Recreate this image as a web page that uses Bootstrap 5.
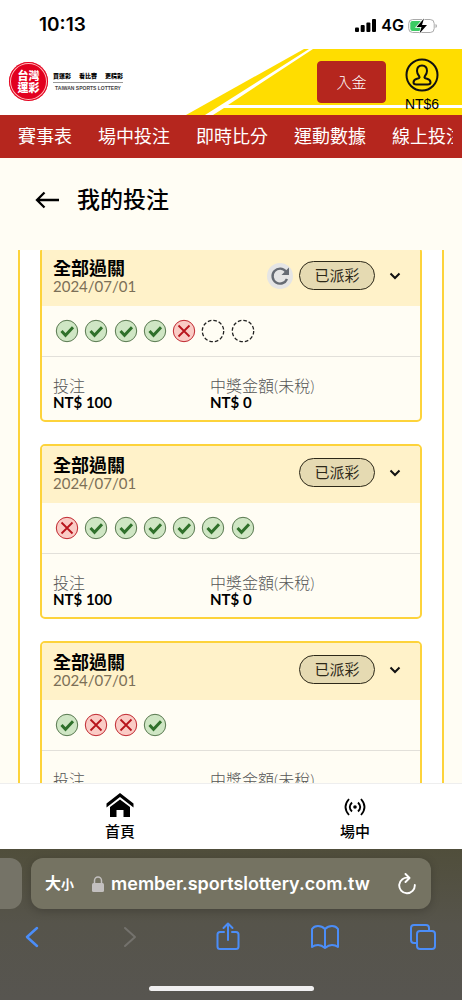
<!DOCTYPE html>
<html lang="zh-Hant">
<head>
<meta charset="utf-8">
<meta name="viewport" content="width=device-width, initial-scale=1">
<title>我的投注</title>
<link href="https://cdn.jsdelivr.net/npm/bootstrap@5.3.0/dist/css/bootstrap.min.css" rel="stylesheet">
<style>
  body { font-family: Lato, "Noto Sans CJK TC", sans-serif; background: #fffdf4; color: #000; line-height: 1.2; }
  svg { display: block; flex: none; }
  .ui-font { font-family: Inter, "Noto Sans CJK TC", sans-serif; }

  /* status bar */
  .status { height: 49px; padding: 2px 24px 0 39px; font-size: 19px; }
  .status .net { font-size: 16px; }

  /* site header */
  .site-head { height: 66px; padding: 0 22px 0 9px; }
  .site-head .stripes { position: absolute; right: 0; top: 0; z-index: 0; }
  .brand { margin-top: 13px; gap: 5px; }
  .logo-seal { width: 39px; height: 39px; background: #e2001f; color: #fff; font-size: 11px; font-weight: 900; line-height: 12px; box-shadow: inset 0 0 0 1px #e2001f, inset 0 0 0 2px #fbb; }
  .tagline { font-size: 6px; font-weight: 900; line-height: 8px; gap: 8px; padding-bottom: 2px; margin-bottom: 1px; border-bottom: 1px solid #999; }
  .tagline-en { font: 700 5px/8px "Liberation Sans", sans-serif; color: #444; }
  .btn-deposit { --bs-btn-color: #fff; --bs-btn-bg: #b5261e; --bs-btn-border-color: #b5261e; --bs-btn-hover-bg: #9c1f18; --bs-btn-hover-color: #fff; width: 69px; height: 42px; margin-top: 12px; padding: 0; font-size: 15px; border-radius: 4px; font-weight: 300; }
  .account { font: 14px/16px "Liberation Sans", sans-serif; width: 36px; margin: 9px 0 0 18px; }

  .main-nav { background: #b5261e; height: 43px; padding: 0 9px 0 18px; }
  .main-nav .nav { gap: 26px; font-size: 18px; }
  .main-nav a { color: #fff; text-decoration: none; white-space: nowrap; }

  /* page title */
  .page-title { height: 92px; padding: 0 34px 8px; gap: 16px; }
  .page-title h1 { font-size: 23px; font-weight: 500; margin: 0; }

  /* bets */
  .bar-fixed { flex: none; }
  .bets { flex: 1 1 0; min-height: 0; margin: 0 18px; border: solid #fdd33b; border-width: 0 2px; background: #fff; }
  .bet-list { margin-top: -3px; padding: 0 20px; gap: 22px; }
  .bet { border: 2px solid #fdd33b; border-radius: 5px; background: #fffdf4; }
  .bet-head { background: #fff2c9; height: 57px; padding: 3px 19px 7px 11px; border-radius: 3px 3px 0 0; }
  .bet-name { font-size: 18px; font-weight: 700; line-height: 20px; margin: 0; }
  .bet-date { font-size: 15px; line-height: 16px; color: #7b6f57; }
  .state { width: 76px; height: 29px; border: 1px solid #2c2818; border-radius: 15px; background: #e5dab2; font-size: 15px; line-height: 27px; color: #2c2818; text-align: center; }
  .round-btn { width: 26px; height: 26px; margin-right: 6px; padding: 0; border: 0; border-radius: 50%; background: #e5e5e5; display: grid; place-items: center; }
  .chev-btn { padding: 0; border: 0; background: none; margin-left: 14px; }
  .legs { padding: 13px; border-bottom: 1px solid #e2e0da; }
  .leg-track { display: grid; grid-template-columns: repeat(7, 1fr); gap: 5px; width: 200px; }
  .sums { padding: 20px 11px 9px; line-height: 17px; font-size: 16px; }
  .sums dl { width: 157px; margin: 0; }
  .sums dt { font-weight: 300; color: #555; white-space: nowrap; }
  .sums dd { margin: 0; font-weight: 700; font-size: 15px; }

  /* site tabs */
  .tabs { height: 66px; background: #fff; border-top: 1px solid #eee; padding: 8px 92px 0 105px; }
  .tabs a { color: #000; text-decoration: none; font-size: 15px; font-weight: 500; line-height: 20px; }
  .tab-icon { height: 29px; }

  /* browser chrome */
  .chrome { background: linear-gradient(#504e3b, #56544b 50%, #575550); padding-top: 9px; }
  .addr-side { flex: none; width: 22px; background: #757367; border-radius: 0 12px 12px 0; }
  .addr { height: 51px; min-width: 0; background: #757362; border-radius: 12px; color: #fff; margin: 0 31px 0 9px; padding: 0 14px; box-shadow: 0 2px 10px #0003; }
  .addr button, .tools button { border: 0; padding: 0; background: none; color: inherit; }
  .addr .text-size { font-size: 16px; margin-right: 18px; }
  .addr input { border: 0; background: none; color: #fff; font-size: 18px; font-weight: 600; min-width: 0; padding: 0; margin-left: 7px; }
  .addr small { font-size: 13px; }
  .tools { color: #4b8df8; padding: 9px 24px 0 17px; height: 47px; }
  .tools button { width: 30px; display: grid; place-items: center; }
  .tools button:disabled { color: #74726d; }
  .home-bar { width: 165px; height: 5px; border-radius: 3px; background: #f0eff0; margin: 30px auto 9px; }
</style>
</head>
<body>
<svg width="0" height="0" class="position-absolute" aria-hidden="true">
  <symbol id="ok" viewBox="0 0 24 24"><circle cx="12" cy="12" r="10.700" fill="#cfe6c4" stroke="#58784f"/><path d="M6.500 12l4 4.200L18 8.300" fill="none" stroke="#2f702b" stroke-width="3"/></symbol>
  <symbol id="no" viewBox="0 0 24 24"><circle cx="12" cy="12" r="10.700" fill="#facbc5" stroke="#c0272f"/><path d="M6.500 6.500l11 11M17.500 6.500l-11 11" fill="none" stroke="#b8141c" stroke-width="1.800"/></symbol>
  <symbol id="wait" viewBox="0 0 24 24"><circle cx="12" cy="12" r="10.700" fill="none" stroke="#222" stroke-width="1.300" stroke-dasharray="3.600 2.003"/></symbol>
  <symbol id="chev" viewBox="0 0 12 10"><path d="M1.500 2.500L6 7l4.500-4.500" fill="none" stroke="#111" stroke-width="2"/></symbol>
</svg>
<div class="d-flex flex-column vh-100 overflow-hidden">
  <div class="status bar-fixed ui-font bg-white d-flex align-items-center justify-content-between fw-semibold">
    <span>10:13</span>
    <span class="net d-flex align-items-center gap-1">
      <svg width="22" height="14" viewBox="0 0 22 14"><rect y="8.500" width="4" height="4.500" rx="1"/><rect x="5.700" y="6" width="4" height="7" rx="1"/><rect x="11.400" y="3.500" width="4" height="9.500" rx="1"/><rect x="17" width="4" height="13" rx="1"/></svg>
      <span>4G</span>
      <svg width="30" height="16" viewBox="0 0 30 16"><rect x=".7" y="1.500" width="25.500" height="13" rx="4" fill="#fff" stroke="#aaa"/><path d="M4.500 3H14v10H4.500Q2.300 13 2.300 10.800V5.200Q2.300 3 4.500 3z" fill="#3ccb63"/><path d="M27.500 6v4q1.500-.5 1.500-2t-1.500-2z" fill="#aaa"/><path d="M16 .5L8.500 9h5l-2 6.500L19 7h-5z" stroke="#fff" stroke-width="1.500" paint-order="stroke"/></svg>
    </span>
  </div>

  <header class="site-head bar-fixed position-relative bg-white d-flex align-items-start overflow-hidden">
    <svg class="stripes" width="276" height="66" viewBox="0 0 276 66" aria-hidden="true"><path d="M0 66L118 0h158v66z" fill="#fd0"/><path d="M19 66L123 0h4L42 56h234v3H38l-11 7z" fill="#fff"/></svg>
    <a href="#" class="brand d-flex align-items-center text-reset text-decoration-none">
      <span class="logo-seal rounded-circle d-grid align-content-center text-center"><span>台灣</span><span>運彩</span></span>
      <span class="text-center">
        <span class="tagline d-flex"><span>買運彩</span><span>看比賽</span><span>更精彩</span></span>
        <span class="tagline-en d-block text-nowrap">TAIWAN SPORTS LOTTERY</span>
      </span>
    </a>
    <button class="btn btn-deposit position-relative ms-auto">入金</button>
    <a href="#" class="account position-relative d-flex flex-column align-items-center text-reset text-decoration-none">
      <svg width="34" height="34" viewBox="0 0 34 34" fill="none" stroke="#111" stroke-width="2"><circle cx="17" cy="17" r="15.500"/><path d="M17 7.500c-3.500 0-5 2.700-5 5.500 0 2.500 1 4 2.300 5.500.8 1.200-.3 1.800-2.300 2.300-2.500.7-3.500 1.700-3.500 3.700 0 1.700 1 2 3 2h11c2 0 3-.3 3-2 0-2-1-3-3.500-3.700-2-.5-3.100-1.100-2.300-2.300C21 17 22 15.500 22 13c0-2.800-1.500-5.500-5-5.500z"/></svg>
      <span class="mt-1">NT$6</span>
    </a>
  </header>

  <nav class="main-nav bar-fixed">
    <div class="nav flex-nowrap align-items-center overflow-hidden h-100">
      <a href="#">賽事表</a><a href="#">場中投注</a><a href="#">即時比分</a><a href="#">運動數據</a><a href="#">線上投注</a>
    </div>
  </nav>

  <div class="page-title bar-fixed d-flex align-items-center">
    <a href="#" aria-label="返回"><svg width="27" height="20" viewBox="0 0 27 20" fill="none" stroke="#000" stroke-width="2.300"><path d="M25 10H3M10.500 2.500L3 10l7.500 7.500"/></svg></a>
    <h1>我的投注</h1>
  </div>

  <main class="bets overflow-hidden">
    <div class="bet-list d-flex flex-column">
      <article class="bet">
        <div class="bet-head d-flex align-items-center">
          <div class="me-auto"><h2 class="bet-name">全部過關</h2><div class="bet-date">2024/07/01</div></div>
          <button class="round-btn" aria-label="重新整理"><svg width="20" height="20" viewBox="0 0 20 20"><path d="M16 5.500A7.500 7.500 0 1 0 17 13" fill="none" stroke="#666b73" stroke-width="2.400"/><path d="M19 1.500v7.500h-7.500z" fill="#666b73"/></svg></button>
          <span class="state">已派彩</span>
          <button class="chev-btn" aria-label="展開"><svg width="12" height="10"><use href="#chev"/></svg></button>
        </div>
        <div class="legs"><div class="leg-track">
          <svg width="24" height="24"><use href="#ok"/></svg><svg width="24" height="24"><use href="#ok"/></svg><svg width="24" height="24"><use href="#ok"/></svg><svg width="24" height="24"><use href="#ok"/></svg><svg width="24" height="24"><use href="#no"/></svg><svg width="24" height="24"><use href="#wait"/></svg><svg width="24" height="24"><use href="#wait"/></svg>
        </div></div>
        <div class="sums d-flex"><dl><dt>投注</dt><dd>NT$ 100</dd></dl><dl><dt>中獎金額(未稅)</dt><dd>NT$ 0</dd></dl></div>
      </article>

      <article class="bet">
        <div class="bet-head d-flex align-items-center">
          <div class="me-auto"><h2 class="bet-name">全部過關</h2><div class="bet-date">2024/07/01</div></div>
          <span class="state">已派彩</span>
          <button class="chev-btn" aria-label="展開"><svg width="12" height="10"><use href="#chev"/></svg></button>
        </div>
        <div class="legs"><div class="leg-track">
          <svg width="24" height="24"><use href="#no"/></svg><svg width="24" height="24"><use href="#ok"/></svg><svg width="24" height="24"><use href="#ok"/></svg><svg width="24" height="24"><use href="#ok"/></svg><svg width="24" height="24"><use href="#ok"/></svg><svg width="24" height="24"><use href="#ok"/></svg><svg width="24" height="24"><use href="#ok"/></svg>
        </div></div>
        <div class="sums d-flex"><dl><dt>投注</dt><dd>NT$ 100</dd></dl><dl><dt>中獎金額(未稅)</dt><dd>NT$ 0</dd></dl></div>
      </article>

      <article class="bet">
        <div class="bet-head d-flex align-items-center">
          <div class="me-auto"><h2 class="bet-name">全部過關</h2><div class="bet-date">2024/07/01</div></div>
          <span class="state">已派彩</span>
          <button class="chev-btn" aria-label="展開"><svg width="12" height="10"><use href="#chev"/></svg></button>
        </div>
        <div class="legs"><div class="leg-track">
          <svg width="24" height="24"><use href="#ok"/></svg><svg width="24" height="24"><use href="#no"/></svg><svg width="24" height="24"><use href="#no"/></svg><svg width="24" height="24"><use href="#ok"/></svg>
        </div></div>
        <div class="sums d-flex"><dl><dt>投注</dt></dl><dl><dt>中獎金額(未稅)</dt></dl></div>
      </article>
    </div>
  </main>

  <nav class="tabs bar-fixed d-flex justify-content-between">
    <a href="#" class="d-flex flex-column align-items-center">
      <span class="tab-icon"><svg width="28" height="26" viewBox="0 0 28 26"><path d="M14 1L.5 11.500v4L14 5l13.500 10.500v-4z"/><path d="M14 7.500L4 15v10h6.500v-7h7v7H24V15z"/></svg></span>
      <span>首頁</span>
    </a>
    <a href="#" class="d-flex flex-column align-items-center">
      <span class="tab-icon d-flex align-items-center"><svg width="22" height="18" viewBox="0 0 22 18" fill="none" stroke="#000" stroke-width="1.800"><circle cx="11" cy="9" r="1.800" fill="#000" stroke="none"/><path d="M5 1Q-2 9 5 17M17 1q7 8 0 16M8 4.500Q3.500 9 8 13.500M14 4.500Q18.500 9 14 13.500"/></svg></span>
      <span>場中</span>
    </a>
  </nav>

  <footer class="chrome bar-fixed ui-font">
    <div class="d-flex">
      <div class="addr-side"></div>
      <div class="addr flex-fill d-flex align-items-center">
        <button class="text-size fw-bold text-nowrap" aria-label="文字大小">大<small>小</small></button>
        <svg width="12" height="16" viewBox="0 0 12 16"><rect y="7" width="12" height="9" rx="1.500" fill="#c3c0bf"/><path d="M2.500 8V4.500a3.500 3.500 0 0 1 7 0V8" fill="none" stroke="#c3c0bf" stroke-width="1.500"/></svg>
        <input class="flex-fill" type="text" aria-label="網址" value="member.sportslottery.com.tw">
        <button aria-label="重新載入"><svg width="20" height="22" viewBox="0 0 20 22" fill="none" stroke="#fff" stroke-width="1.900" stroke-linecap="round" stroke-linejoin="round"><path d="M11.500 4.800A7.800 7.800 0 1 0 17.800 12M8.500 1l4 4-4 4"/></svg></button>
      </div>
    </div>
    <div class="tools d-flex justify-content-between align-items-center">
      <button aria-label="上一頁"><svg width="16" height="24" viewBox="0 0 16 24" fill="none" stroke="currentColor" stroke-width="2.500" stroke-linecap="round" stroke-linejoin="round"><path d="M13 3L3 12l10 9"/></svg></button>
      <button aria-label="下一頁" disabled><svg width="16" height="24" viewBox="0 0 16 24" fill="none" stroke="currentColor" stroke-width="2" stroke-linecap="round" stroke-linejoin="round"><path d="M3 3l10 9-10 9"/></svg></button>
      <button aria-label="分享"><svg width="26" height="30" viewBox="0 0 26 30" fill="none" stroke="currentColor" stroke-width="2" stroke-linecap="round" stroke-linejoin="round"><path d="M9 10H5q-2.500 0-2.500 2.500v12Q2.500 27 5 27h16q2.500 0 2.500-2.500v-12Q23.500 10 21 10h-4M13 18V2M8.500 6L13 1.500 17.500 6"/></svg></button>
      <button aria-label="書籤"><svg width="30" height="26" viewBox="0 0 30 26" fill="none" stroke="currentColor" stroke-width="2" stroke-linejoin="round"><path d="M15 5Q12 2 8 2T2 5v18q2.500-2 6-2t7 3q3.500-3 7-3t6 2V5q-2-3-6-3t-7 3zV24"/></svg></button>
      <button aria-label="分頁"><svg width="28" height="28" viewBox="0 0 28 28" fill="none" stroke="currentColor" stroke-width="2"><rect x="8" y="8" width="18" height="18" rx="3"/><path d="M8 20H5q-3 0-3-3V5q0-3 3-3h12q3 0 3 3v3"/></svg></button>
    </div>
    <div class="home-bar"></div>
  </footer>
</div>
<script src="https://cdn.jsdelivr.net/npm/bootstrap@5.3.0/dist/js/bootstrap.bundle.min.js"></script>
</body>
</html>
